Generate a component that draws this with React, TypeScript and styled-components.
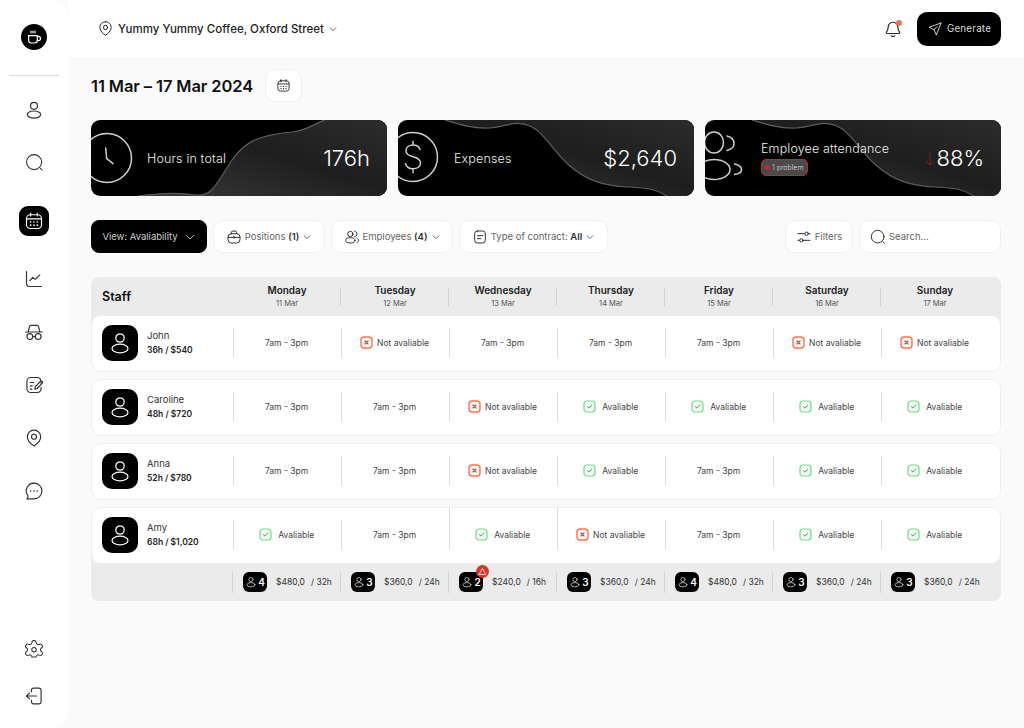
import React from 'react';
import styled, { createGlobalStyle } from 'styled-components';

const GlobalStyle = createGlobalStyle`
	html, body {
		margin: 0;
		padding: 0;
		background: #fafafa;
		font-family: "Inter", "Liberation Sans", sans-serif;
		color: #111;
	}
	* { box-sizing: border-box; }
`;

const Page = styled.div`
	display: flex;
	width: 1024px;
	height: 728px;
	overflow: hidden;
	background: #fafafa;
`;

const Sidebar = styled.aside`
	width: 68px;
	flex: none;
	display: flex;
	flex-direction: column;
	align-items: center;
	background: #fff;
	border-radius: 0 16px 16px 0;
	padding: 24px 0 9px;
`;

const Logo = styled.div`
	width: 26px;
	height: 26px;
	border-radius: 50%;
	background: #000;
	color: #fff;
	display: flex;
	align-items: center;
	justify-content: center;
`;

const SideDivider = styled.div`
	width: 50px;
	height: 1px;
	background: #ddd;
	margin: 25px 0 7px;
`;

const NavItem = styled.div<{ $active?: boolean; $h?: number }>`
	height: ${p => p.$h ?? (p.$active ? 63 : 53)}px;
	width: 100%;
	display: flex;
	align-items: center;
	justify-content: center;
	color: #333;
`;

const ActiveNav = styled.div`
	width: 30px;
	height: 30px;
	border-radius: 9px;
	background: #000;
	color: #fff;
	display: flex;
	align-items: center;
	justify-content: center;
`;

const SideFoot = styled.div`
	margin-top: auto;
	width: 100%;
`;

const Content = styled.div`
	flex: 1;
	min-width: 0;
	display: flex;
	flex-direction: column;
`;

const TopBar = styled.header`
	height: 57px;
	flex: none;
	background: #fff;
	display: flex;
	align-items: center;
	padding: 0 23px 0 29px;
`;

const Place = styled.div`
	display: flex;
	align-items: center;
	gap: 4px;
	font-size: 11.5px;
	font-weight: 500;
	color: #222;
`;

const TopActions = styled.div`
	margin-left: auto;
	display: flex;
	align-items: center;
	gap: 15px;
`;

const BellWrap = styled.div`
	position: relative;
	display: flex;
	color: #222;
`;

const BellDot = styled.span`
	position: absolute;
	top: 0;
	right: 0;
	width: 6px;
	height: 6px;
	border-radius: 50%;
	background: #f4704a;
`;

const GenerateButton = styled.button`
	width: 84px;
	height: 34px;
	border: 0;
	border-radius: 10px;
	background: #000;
	color: #ddd;
	display: flex;
	align-items: center;
	justify-content: center;
	gap: 4px;
	font: 400 9.8px "Inter", sans-serif;
	letter-spacing: 0.2px;
`;

const Main = styled.main`
	flex: 1;
	padding: 12px 23px 0;
`;

const TitleRow = styled.div`
	display: flex;
	align-items: center;
	gap: 12px;
	height: 33px;
`;

const Title = styled.h1`
	margin: 0;
	font-size: 16.5px;
	font-weight: 600;
	letter-spacing: -0.1px;
	width: 162px;
	white-space: nowrap;
`;

const SquareButton = styled.div`
	width: 37px;
	height: 33px;
	border-radius: 10px;
	background: #fff;
	border: 1px solid #f0f0f0;
	display: flex;
	align-items: center;
	justify-content: center;
	color: #222;
`;

const Cards = styled.section`
	display: grid;
	grid-template-columns: repeat(3, 296px);
	gap: 11px;
	margin-top: 18px;
`;

const Card = styled.div`
	position: relative;
	height: 76px;
	border-radius: 9px;
	overflow: hidden;
	background: #000;
	color: #fff;
	display: flex;
	align-items: center;
	padding: 0 17px 0 56px;
`;

const CardArt = styled.svg`
	position: absolute;
	inset: 0;
	width: 296px;
	height: 76px;
`;

const CardText = styled.div`
	position: relative;
	display: flex;
	flex-direction: column;
	align-items: flex-start;
	gap: 3px;
	font-size: 12.5px;
	font-weight: 300;
	letter-spacing: 0.15px;
	color: #eee;
`;

const ProblemChip = styled.span`
	display: flex;
	align-items: center;
	gap: 2px;
	height: 17px;
	padding: 0 3px;
	border-radius: 5px;
	border: 1px solid #c0282f;
	background: #4a4a4a;
	font-size: 7px;
	letter-spacing: 0;
	color: #ddd;
`;

const ChipDot = styled.i`
	flex: none;
	width: 5px;
	height: 5px;
	border-radius: 50%;
	background: #d4202a;
`;

const CardValue = styled.div`
	position: relative;
	margin-left: auto;
	display: flex;
	align-items: center;
	font-size: 22px;
	font-weight: 300;
	color: #fff;
`;

const DownArrow = styled.svg`
	color: #7e1d22;
`;

const Toolbar = styled.section`
	display: flex;
	gap: 6px;
	margin-top: 24px;
	height: 33px;
`;

const ToolButton = styled.div<{ $w: number }>`
	width: ${p => p.$w}px;
	height: 33px;
	border-radius: 10px;
	background: #fff;
	border: 1px solid #f0f0f0;
	display: flex;
	align-items: center;
	justify-content: center;
	gap: 3px;
	font-size: 9.5px;
	color: #666;
	white-space: nowrap;
	svg { flex: none; color: #222; }
	b { font-weight: 600; color: #333; }
`;

const ViewButton = styled(ToolButton)`
	background: #000;
	border-color: #000;
	border-radius: 8px;
	color: #ccc;
	gap: 6px;
	svg { color: #ddd; }
`;

const SearchBox = styled(ToolButton)`
	justify-content: flex-start;
	padding-left: 10px;
`;

const ToolSpacer = styled.div`
	flex: 1;
`;

const Table = styled.section`
	margin-top: 24px;
	display: flex;
	flex-direction: column;
	gap: 6.5px;
	width: 910px;
`;

const columns = '142px repeat(7, 108px)';

const HeadRow = styled.div`
	display: grid;
	grid-template-columns: ${columns};
	height: 47px;
	margin-bottom: -16px;
	padding-bottom: 9px;
	background: #ebebeb;
	border-radius: 8px 8px 0 0;
	align-items: center;
`;

const StaffHead = styled.div`
	padding-left: 11px;
	font-size: 12.5px;
	font-weight: 600;
`;

const Day = styled.div<{ $first?: boolean }>`
	position: relative;
	text-align: center;
	line-height: 1;
	font-size: 10px;
	font-weight: 600;
	color: #222;
	span {
		display: block;
		margin-top: 5px;
		font-size: 7.5px;
		font-weight: 400;
		color: #555;
	}
	&::before {
		content: '';
		display: ${p => (p.$first ? 'none' : 'block')};
		position: absolute;
		left: -1px;
		top: 3px;
		bottom: 1px;
		width: 1px;
		background: #d4d4d4;
	}
`;

const Row = styled.div`
	position: relative;
	display: grid;
	grid-template-columns: ${columns};
	height: 57.5px;
	padding-bottom: 1px;
	background: #fff;
	border: 1px solid #efefef;
	border-radius: 10px;
	align-items: center;
`;

const Person = styled.div`
	display: flex;
	align-items: center;
	gap: 9px;
	padding-left: 10px;
`;

const Avatar = styled.div`
	width: 36px;
	height: 36px;
	border-radius: 10px;
	background: #000;
	color: #fff;
	display: flex;
	align-items: center;
	justify-content: center;
`;

const PersonName = styled.div`
	font-size: 9.5px;
	color: #333;
	line-height: 14px;
	b {
		display: block;
		font-size: 8.5px;
		font-weight: 600;
		color: #222;
	}
`;

const Cell = styled.div<{ $tall?: boolean }>`
	position: relative;
	height: 29px;
	margin-left: -1px;
	padding-right: 3px;
	display: flex;
	align-items: center;
	justify-content: center;
	gap: 4px;
	font-size: 8.5px;
	color: #444;
	border-left: 1px solid #dcdcdc;
	white-space: nowrap;
	&::before {
		content: '';
		display: ${p => (p.$tall ? 'block' : 'none')};
		position: absolute;
		left: -1px;
		bottom: 100%;
		width: 1px;
		height: 12px;
		background: #dcdcdc;
	}
`;

const FootRow = styled.div`
	display: grid;
	grid-template-columns: ${columns};
	height: 46.5px;
	margin-top: -16px;
	padding-top: 9px;
	background: #ebebeb;
	border-radius: 0 0 8px 8px;
	align-items: center;
`;

const Total = styled.div`
	height: 21px;
	margin-left: -1px;
	padding-left: 10px;
	display: flex;
	align-items: center;
	border-left: 1px solid #d4d4d4;
	font-size: 8.5px;
	color: #333;
	white-space: nowrap;
`;

const CountBadge = styled.div`
	position: relative;
	width: 24px;
	height: 20px;
	margin-right: 9px;
	border-radius: 6px;
	background: #000;
	color: #fff;
	font-size: 10px;
	font-weight: 600;
	display: flex;
	align-items: center;
	justify-content: center;
	gap: 1px;
	svg { color: #ccc; }
`;

const AlertDot = styled.span`
	position: absolute;
	top: -7px;
	right: -6px;
	width: 13px;
	height: 13px;
	border-radius: 50%;
	background: #d9352b;
	color: #fff;
	display: flex;
	align-items: center;
	justify-content: center;
	svg { color: #fff; }
`;

const Hours = styled.span`
	margin-left: 6px;
`;

type IconProps = { size?: number; stroke?: number; children: React.ReactNode };

const Icon = ({ size = 20, stroke = 1.4, children }: IconProps) => (
	<svg width={size} height={size} viewBox="0 0 24 24" fill="none" stroke="currentColor" strokeWidth={stroke} strokeLinecap="round" strokeLinejoin="round">
		{children}
	</svg>
);

const UserGlyph = ({ size = 20, stroke = 1.4 }: { size?: number; stroke?: number }) => (
	<Icon size={size} stroke={stroke}>
		<circle cx="12" cy="7" r="4.2" />
		<ellipse cx="12" cy="17.5" rx="8" ry="4.3" />
	</Icon>
);

const CalendarGlyph = ({ size = 20 }: { size?: number }) => (
	<Icon size={size}>
		<rect x="3" y="4.5" width="18" height="16.5" rx="4.5" />
		<path d="M3.5 9.5h17M8 2.5v3.5M16 2.5v3.5" />
		<path d="M8 13.2h.01M12 13.2h.01M16 13.2h.01M8 17h.01M12 17h.01M16 17h.01" strokeWidth="2" />
	</Icon>
);

const PinGlyph = ({ size = 20 }: { size?: number }) => (
	<Icon size={size}>
		<path d="M12 2.5c-4.8 0-8 3.6-8 8 0 5 4.6 9 8 11 3.4-2 8-6 8-11 0-4.4-3.2-8-8-8Z" />
		<circle cx="12" cy="10.5" r="3" />
	</Icon>
);

const SearchGlyph = ({ size = 20 }: { size?: number }) => (
	<Icon size={size}>
		<circle cx="11.5" cy="11.5" r="9.5" />
		<path d="M19.5 19.5l2 2" />
	</Icon>
);

const Chevron = ({ size = 12 }: { size?: number }) => (
	<Icon size={size} stroke={1.6}>
		<path d="M5 9l7 7 7-7" />
	</Icon>
);

const CheckBoxIcon = () => (
	<svg width="13" height="13" viewBox="0 0 13 13" fill="none">
		<rect x="1" y="1" width="11" height="11" rx="3" fill="#f3fbf4" stroke="#74d98c" strokeWidth="1.2" />
		<path d="M4.4 6.7l1.5 1.4 2.7-3" stroke="#3aa85a" strokeWidth="1" strokeLinecap="round" strokeLinejoin="round" />
	</svg>
);

const CrossBoxIcon = () => (
	<svg width="13" height="13" viewBox="0 0 13 13" fill="none">
		<rect x="1" y="1" width="11" height="11" rx="3" fill="#fff6f3" stroke="#f4754f" strokeWidth="1.4" />
		<path d="M5 5l3 3M8 5l-3 3" stroke="#d9352b" strokeWidth="1.1" strokeLinecap="round" />
	</svg>
);

const navIcons: React.ReactNode[] = [
	<UserGlyph />,
	<SearchGlyph size={19} />,
	null,
	<Icon>
		<path d="M3 3v14.500A3.500 3.500 0 0 0 6.500 21H21" />
		<path d="M7 14l3.500-4 3 2.500L19 7" />
	</Icon>,
	<Icon>
		<path d="M2 12h20M5 12l1.500-6.500A2 2 0 0 1 8.500 4h7a2 2 0 0 1 2 1.500L19 12" />
		<circle cx="7" cy="17.500" r="3.500" />
		<circle cx="17" cy="17.500" r="3.500" />
		<path d="M10.500 17.500h3" />
	</Icon>,
	<Icon>
		<path d="M20.500 10V7.500a4.500 4.500 0 0 0-4.500-4.500H8a4.500 4.500 0 0 0-4.500 4.500v9A4.500 4.500 0 0 0 8 21h8a4.500 4.500 0 0 0 4.500-4.500V15" />
		<path d="M7.500 9h4M7.500 13h2.500M7.500 17h2" />
		<path d="M13 17l.6-3 6-6.200a1.500 1.500 0 0 1 2.200 2.200l-6 6.200-2.800.8Z" />
	</Icon>,
	<PinGlyph />,
	<Icon>
		<path d="M12 2.500a9.500 9.500 0 0 1 0 19H3.500l1.600-3.200A9.500 9.500 0 0 1 12 2.500Z" />
		<path d="M8 12h.01M12 12h.01M16 12h.01" strokeWidth="2" />
	</Icon>,
];

type DayInfo = { name: string; date: string };

const days: DayInfo[] = [
	{ name: 'Monday', date: '11 Mar' },
	{ name: 'Tuesday', date: '12 Mar' },
	{ name: 'Wednesday', date: '13 Mar' },
	{ name: 'Thursday', date: '14 Mar' },
	{ name: 'Friday', date: '15 Mar' },
	{ name: 'Saturday', date: '16 Mar' },
	{ name: 'Sunday', date: '17 Mar' },
];

// t = shift, n = not available, a = available
const staff = [
	{ name: 'John', info: '36h / $540', week: 'tntttnn' },
	{ name: 'Caroline', info: '48h / $720', week: 'ttnaaaa' },
	{ name: 'Anna', info: '52h / $780', week: 'ttnataa' },
	{ name: 'Amy', info: '68h / $1,020', week: 'atantaa' },
];

const totals = [
	{ count: 4, money: '$480,0', hours: '/ 32h' },
	{ count: 3, money: '$360,0', hours: '/ 24h' },
	{ count: 2, money: '$240,0', hours: '/ 16h', alert: true },
	{ count: 3, money: '$360,0', hours: '/ 24h' },
	{ count: 4, money: '$480,0', hours: '/ 32h' },
	{ count: 3, money: '$360,0', hours: '/ 24h' },
	{ count: 3, money: '$360,0', hours: '/ 24h' },
];

const waveA = 'M47 76C70 73 92 73 105 75C122 77 126 62 141 40C152 24 165 15 201 12C218 10 222 4 234 0';
const waveB = 'M47 0C62 5 76 9 92 8C110 6 118 0 132 6C146 12 158 35 172 46C188 60 205 66 230 67C250 68 258 69 269 76';

const CardBackground = ({ id, wave, fillClose }: { id: string; wave: string; fillClose: string }) => (
	<CardArt viewBox="0 0 296 76" fill="none">
		<defs>
			<linearGradient id={id} x1="0" y1="1" x2="1" y2="0">
				<stop offset="0" stopColor="#3a3a3a" />
				<stop offset="0.55" stopColor="#1e1e1e" />
				<stop offset="1" stopColor="#2c2c2c" />
			</linearGradient>
		</defs>
		<path d={wave + fillClose} fill={`url(#${id})`} />
		<path d={wave} stroke="#615c5c" strokeWidth="1.2" />
	</CardArt>
);

const Slot = ({ kind, tall }: { kind: string; tall?: boolean }) => {
	if (kind === 'n') {
		return <Cell $tall={tall}><CrossBoxIcon />Not avaliable</Cell>;
	}
	if (kind === 'a') {
		return <Cell $tall={tall}><CheckBoxIcon /><span>&nbsp;Avaliable</span></Cell>;
	}
	return <Cell $tall={tall}>7am - 3pm</Cell>;
};

const App: React.FC = () => {
	return (
		<Page>
			<GlobalStyle />
			<Sidebar>
				<Logo>
					<Icon size={16} stroke={1.8}>
						<path d="M4 10h13v7a4 4 0 0 1-4 4H8a4 4 0 0 1-4-4v-7Z" />
						<path d="M17 11h1.500a3 3 0 0 1 0 6.500H17" />
						<path d="M7.500 3v3M10.500 3v3M13.500 3v3" />
					</Icon>
				</Logo>
				<SideDivider />
				{navIcons.map((icon, i) =>
					icon ? (
						<NavItem key={i}>{icon}</NavItem>
					) : (
						<NavItem key={i} $active>
							<ActiveNav><CalendarGlyph size={20} /></ActiveNav>
						</NavItem>
					)
				)}
				<SideFoot>
					<NavItem $h={47}>
						<Icon size={18}>
							<path d="M9.200 3.400a2.800 2.800 0 0 1 5.600 0 2.800 2.800 0 0 0 4.200 2.400 2.800 2.800 0 0 1 2.800 4.900 2.800 2.800 0 0 0 0 4.600 2.800 2.800 0 0 1-2.800 4.900 2.800 2.800 0 0 0-4.200 2.400h-5.600a2.800 2.800 0 0 0-4.200-2.400 2.800 2.800 0 0 1-2.800-4.900 2.800 2.800 0 0 0 0-4.600A2.800 2.800 0 0 1 5 5.800a2.800 2.800 0 0 0 4.200-2.400Z" />
							<circle cx="12" cy="13" r="3" />
						</Icon>
					</NavItem>
					<NavItem $h={47}>
						<Icon>
							<path d="M9 7V5a2.500 2.500 0 0 1 2.500-2.500H18A2.500 2.500 0 0 1 20.500 5v14a2.500 2.500 0 0 1-2.500 2.500h-6.500A2.500 2.500 0 0 1 9 19v-2" />
							<path d="M15 12H3M6.500 8.500 3 12l3.500 3.500" />
						</Icon>
					</NavItem>
				</SideFoot>
			</Sidebar>
			<Content>
				<TopBar>
					<Place>
						<PinGlyph size={17} />
						Yummy Yummy Coffee, Oxford Street
						<Chevron size={10} />
					</Place>
					<TopActions>
						<BellWrap>
							<Icon size={18} stroke={1.5}>
								<path d="M12 3a6.500 6.500 0 0 0-6.500 6.500c0 4-1.500 5.500-2.500 7 0 1 .7 1.500 2 1.500h14c1.300 0 2-.5 2-1.500-1-1.500-2.500-3-2.500-7A6.500 6.500 0 0 0 12 3Z" />
								<path d="M9.500 21c1.500 1 3.500 1 5 0" />
							</Icon>
							<BellDot />
						</BellWrap>
						<GenerateButton>
							<Icon size={16}>
								<path d="M21 3 3 9.500l7.500 3.500L14 21 21 3Z" />
								<path d="M10.500 13 15 8.500" />
							</Icon>
							Generate
						</GenerateButton>
					</TopActions>
				</TopBar>
				<Main>
					<TitleRow>
						<Title>11 Mar – 17 Mar 2024</Title>
						<SquareButton><CalendarGlyph size={15} /></SquareButton>
					</TitleRow>
					<Cards>
						<Card>
							<CardBackground id="waveOne" wave={waveA} fillClose="L296 0L296 76Z" />
							<CardArt viewBox="0 0 296 76" fill="none" stroke="#cfcfcf" strokeWidth="1.5" strokeLinecap="round">
								<circle cx="16" cy="38" r="24.500" />
								<path d="M14.700 28l1 10.700 6.300 5" />
							</CardArt>
							<CardText>Hours in total</CardText>
							<CardValue>176h</CardValue>
						</Card>
						<Card>
							<CardBackground id="waveTwo" wave={waveB} fillClose="L296 76L296 0Z" />
							<CardArt viewBox="0 0 296 76" fill="none" stroke="#cfcfcf" strokeWidth="1.5" strokeLinecap="round">
								<circle cx="15" cy="37" r="24.500" />
								<path d="M22 29.500c-1-3-3.500-4.500-7-4.500-4 0-7 2.200-7 5.700 0 3.500 3 5 7 6 4.500 1 7.500 2.500 7.500 6.300 0 3.600-3.200 5.800-7.500 5.800-3.800 0-6.500-1.700-7.500-5M15 21.500V25M15 49v3.500" />
							</CardArt>
							<CardText>Expenses</CardText>
							<CardValue>$2,640</CardValue>
						</Card>
						<Card>
							<CardBackground id="waveThree" wave={waveB} fillClose="L296 76L296 0Z" />
							<CardArt viewBox="0 0 296 76" fill="none" stroke="#cfcfcf" strokeWidth="1.5" strokeLinecap="round">
								<ellipse cx="9" cy="22.500" rx="9.500" ry="10.500" />
								<ellipse cx="9" cy="49.500" rx="16" ry="10" />
								<path d="M22 16c4.500 1 7 3.500 7 7.500s-2.500 6-7 7M29.500 44c4.500 1 7 2.500 7 5.500s-2.500 4.500-7 5" />
							</CardArt>
							<CardText>
								Employee attendance
								<ProblemChip><ChipDot />1 problem</ProblemChip>
							</CardText>
							<CardValue>
								<DownArrow width="12" height="18" viewBox="0 0 12 18" fill="none" stroke="currentColor" strokeWidth="1">
									<path d="M6 2v14M2 12l4 4 4-4" />
								</DownArrow>
								88%
							</CardValue>
						</Card>
					</Cards>
					<Toolbar>
						<ViewButton $w={116}>View: Avaliability <Chevron size={12} /></ViewButton>
						<ToolButton $w={112}>
							<Icon size={16}>
								<rect x="3" y="7" width="18" height="14" rx="5" />
								<path d="M8 7V5.500A2.500 2.500 0 0 1 10.500 3h3A2.500 2.500 0 0 1 16 5.500V7M3 12.500h18M12 11v3" />
							</Icon>
							<span>Positions <b>(1)</b></span>
							<Chevron size={10} />
						</ToolButton>
						<ToolButton $w={122}>
							<Icon size={16}>
								<circle cx="9.500" cy="7.500" r="4" />
								<ellipse cx="9.500" cy="17" rx="7" ry="4" />
								<path d="M16 3.500c2 .3 3.500 1.800 3.500 4s-1.500 3.700-3.500 4M19.500 14c1.500.5 2.500 1.600 2.500 3s-1 2.500-2.500 3" />
							</Icon>
							<span>Employees <b>(4)</b></span>
							<Chevron size={10} />
						</ToolButton>
						<ToolButton $w={149}>
							<Icon size={16}>
								<rect x="4" y="3" width="16" height="18" rx="4" />
								<path d="M8 10h8M8 14.500h5" />
							</Icon>
							<span>Type of contract: <b>All</b></span>
							<Chevron size={10} />
						</ToolButton>
						<ToolSpacer />
						<ToolButton $w={68}>
							<Icon size={16}>
								<path d="M3 7h10M19 7h2M3 17h2M11 17h10" />
								<circle cx="16" cy="7" r="2.500" />
								<circle cx="8" cy="17" r="2.500" />
							</Icon>
							Filters
						</ToolButton>
						<SearchBox $w={142}>
							<SearchGlyph size={16} />
							Search...
						</SearchBox>
					</Toolbar>
					<Table>
						<HeadRow>
							<StaffHead>Staff</StaffHead>
							{days.map((d, i) => (
								<Day key={d.name} $first={i === 0}>
									{d.name}
									<span>{d.date}</span>
								</Day>
							))}
						</HeadRow>
						{staff.map(s => (
							<Row key={s.name}>
								<Person>
									<Avatar><UserGlyph size={24} stroke={1.2} /></Avatar>
									<PersonName>
										{s.name}
										<b>{s.info}</b>
									</PersonName>
								</Person>
								{s.week.split('').map((kind, i) => (
									<Slot key={i} kind={kind} tall={s.name === 'Amy' && (i === 2 || i === 3)} />
								))}
							</Row>
						))}
						<FootRow>
							<div />
							{totals.map((t, i) => (
								<Total key={i}>
									<CountBadge>
										<UserGlyph size={12} stroke={1.6} />
										{t.count}
										{t.alert && (
											<AlertDot>
												<Icon size={9} stroke={2}>
													<path d="M3 20 12 4l9 16H3Z" />
												</Icon>
											</AlertDot>
										)}
									</CountBadge>
									{t.money}
									<Hours>{t.hours}</Hours>
								</Total>
							))}
						</FootRow>
					</Table>
				</Main>
			</Content>
		</Page>
	);
};

export default App;
